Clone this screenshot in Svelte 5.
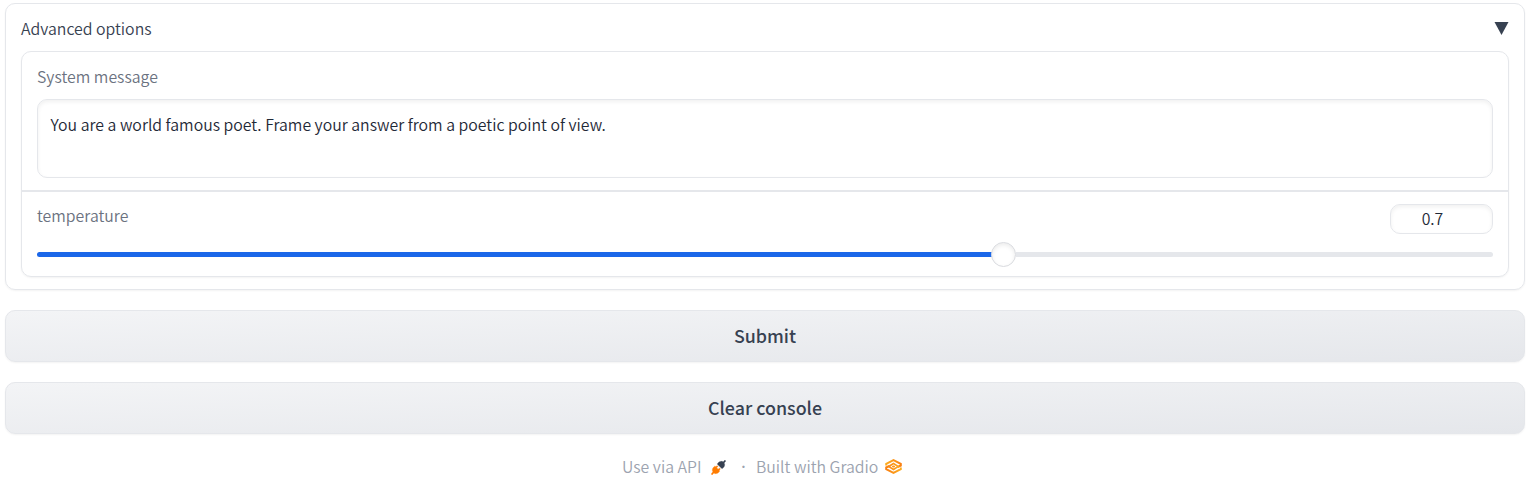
<script>
  let message = $state('You are a world famous poet. Frame your answer from a poetic point of view.');
  let temperature = $state('0.7');
  const fill = $derived(Number(temperature) * 100);
</script>

<main>
  <section class="panel">
    <header>
      <span class="title">Advanced options</span>
      <svg class="arrow" viewBox="0 0 14 13"><path d="M0 0H14L7 13Z" fill="#374151" /></svg>
    </header>
    <div class="form">
      <div class="block message">
        <span class="label">System message</span>
        <textarea spellcheck="false" bind:value={message}></textarea>
      </div>
      <div class="block temp">
        <div class="head">
          <span class="label">temperature</span>
          <input bind:value={temperature} aria-label="temperature" />
        </div>
        <div class="track">
          <div class="filled" style="width: {fill * 0.948}%"></div>
          <div class="thumb"></div>
          <div class="rest"></div>
        </div>
      </div>
    </div>
  </section>
  <button>Submit</button>
  <button>Clear console</button>
  <footer>
    <span class="api">Use via API</span>
    <svg class="plug" viewBox="0 0 28 28">
      <path fill="#374151" stroke="#374151" stroke-width=".7" d="M26.94 2.94a1.33 1.33 0 0 0-1.88-1.88L22.57 3.54C21.12 2.59 19.54 2.43 18.18 2.64 16.55 2.89 15.11 3.67 14.39 4.39L12.39 6.39a1.33 1.33 0 0 0 0 1.89L19.72 15.61a1.33 1.33 0 0 0 1.89 0L23.61 13.61C24.33 12.89 25.11 11.45 25.36 9.82 25.57 8.46 25.41 6.88 24.46 5.43Z" />
      <path fill="#ff7c00" stroke="#ff7c00" stroke-width=".7" d="M12.28 12.94a1.33 1.33 0 0 0-1.89-1.89L8.9 12.55l-.62-.61a1.33 1.33 0 0 0-1.89 0L4.39 13.94C3.67 14.66 2.89 16.1 2.64 17.73 2.43 19.09 2.59 20.68 3.54 22.13L1.06 25.06a1.33 1.33 0 0 0 1.88 1.88L5.43 24.46C6.88 25.41 8.46 25.57 9.82 25.36 11.45 25.11 12.89 24.33 13.61 23.61L15.61 21.61a1.33 1.33 0 0 0 0-1.89L15.1 19.2 16.94 17.61a1.33 1.33 0 0 0-1.88-1.89L13.2 17.3 10.7 14.5Z" />
    </svg>
    <span class="dot">·</span>
    <span class="built">Built with Gradio</span>
    <svg class="gradio" viewBox="0 0 17 15" fill="none">
      <defs>
        <linearGradient id="top" x1="0" y1="0" x2="17" y2="0" gradientUnits="userSpaceOnUse"><stop stop-color="#fdb022" /><stop offset="1" stop-color="#f97c10" /></linearGradient>
        <linearGradient id="base" x1="0" y1="0" x2="17" y2="0" gradientUnits="userSpaceOnUse"><stop stop-color="#f97c10" /><stop offset="1" stop-color="#fdb022" /></linearGradient>
      </defs>
      <path d="M1.2 6.5V4.8L8.5 1.2L15.8 4.8V6.5L12.6 8" stroke="url(#top)" stroke-width="2" />
      <path d="M15.8 8.5V10.2L8.5 13.8L1.2 10.2V8.5L4.4 7" stroke="url(#base)" stroke-width="2" />
      <path d="M3.7 7.5L8.5 4.5L13.3 7.5L8.5 10.5Z" stroke="url(#base)" stroke-width="1.5" />
      <ellipse cx="8.5" cy="7.5" rx="1.6" ry="1.1" fill="#fa9418" />
    </svg>
  </footer>
</main>

<style>
  :global(body) { background: #fff; }
  main, textarea, input, button {
    font-family: "Noto Sans CJK SC", "Open Sans", sans-serif;
    font-size: 15.83px;
    font-weight: 350;
  }
  * { box-sizing: border-box; }
  main { display: flex; flex-direction: column; gap: 20px; padding: 3px 3px 0 5px; color: #374151; line-height: 24px; }
  .panel { height: 287px; border: 1px solid #e5e7eb; border-radius: 10px; padding: 13px 15px 0; box-shadow: 0 1px 2px rgba(0,0,0,.05); }
  header { display: flex; justify-content: space-between; height: 34px; }
  header span { white-space: nowrap; }
  .arrow { width: 15px; height: 13px; margin-top: 5px; }
  .form { height: 226px; border: 1px solid #e5e7eb; border-radius: 10px; box-shadow: 0 1px 2px rgba(0,0,0,.05); }
  .block { padding: 13px 15px 0; }
  .message { height: 140px; border-bottom: 2px solid #e5e7eb; }
  .label { display: block; color: #6b7280; }
  textarea, input { display: block; border: 1px solid #e5e7eb; border-radius: 10px; background: #fff; color: #1f2937; outline: none; box-shadow: inset 0 2px 4px rgba(0,0,0,.06); }
  textarea { width: 100%; height: 79px; margin-top: 10px; padding: 12px 12.5px; line-height: 25px; resize: none; overflow: hidden; }
  .temp { padding-top: 12px; }
  .head { display: flex; justify-content: space-between; height: 38px; }
  input { width: 103px; height: 30px; padding: 0 18px 2px 0; text-align: center; }
  .track { display: flex; align-items: center; height: 25px; }
  .filled { height: 5px; flex: none; border-radius: 3px 0 0 3px; background: #1b67e9; }
  .thumb { width: 25px; height: 25px; flex: none; margin-left: -12px; border: 1px solid #d9dbdf; border-radius: 50%; background: #fff; box-shadow: inset 0 2px 4px rgba(0,0,0,.08); }
  .rest { flex: 1; height: 5px; border-radius: 0 3px 3px 0; background: #e5e7eb; }
  button { height: 52px; padding: 0 0 2px; border: 1px solid #e5e7eb; border-radius: 10px; background: linear-gradient(to bottom right, #f3f4f6, #e5e7eb); box-shadow: 0 1px 2px rgba(0,0,0,.05); color: #374151; font-size: 17.85px; font-weight: 500; line-height: 24px; }
  footer { display: flex; align-items: flex-start; height: 26px; padding: 1px 0 0 617px; color: #9ca3af; white-space: nowrap; }
  .api { width: 79px; }
  .plug { width: 15px; height: 15px; margin: 5px 0 0 10px; }
  .dot { width: 30px; padding-left: 5px; text-align: center; font-family: "Open Sans", sans-serif; font-weight: 600; }
  .built { width: 123px; }
  .gradio { width: 17px; height: 15px; margin: 4px 0 0 6px; }
</style>
